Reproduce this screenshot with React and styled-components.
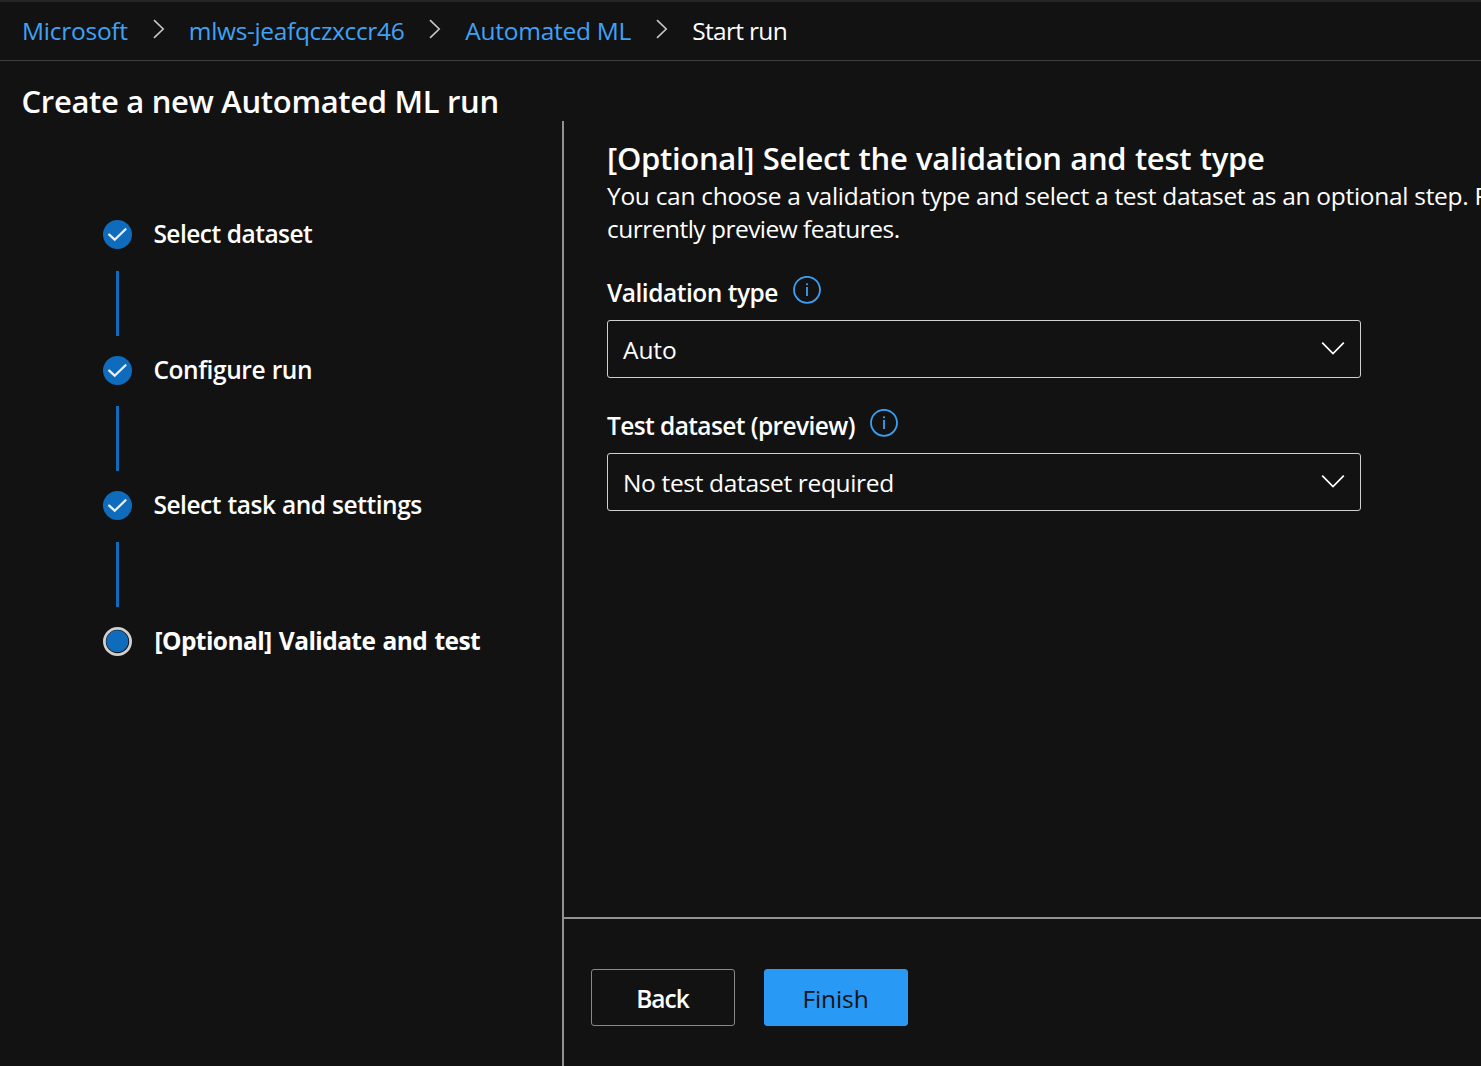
import React from "react";
import styled, { createGlobalStyle } from "styled-components";

const GlobalStyle = createGlobalStyle`
  *, *::before, *::after { box-sizing: border-box; }
  body {
    margin: 0;
    background: #121212;
    color: #fff;
    font-family: "Open Sans", "Noto Sans", sans-serif;
    font-size: 24.5px;
    overflow: hidden;
  }
`;

const Page = styled.div`
  display: flex;
  flex-direction: column;
  width: 100vw;
  height: 100vh;
  overflow: hidden;
`;

const TopBar = styled.nav`
  display: flex;
  align-items: center;
  flex: none;
  height: 61px;
  padding: 0 0 1px 22px;
  border-top: 2px solid #252525;
  border-bottom: 1px solid #3e3e3e;
`;

const Crumb = styled.span`
  line-height: 34px;
  white-space: nowrap;
  color: ${(p) => (p.$current ? "#fff" : "#3fa2f7")};
  letter-spacing: ${(p) => p.$tracking}px;
`;

const CrumbArrow = styled.svg`
  flex: none;
  width: 12px;
  height: 20px;
  margin: 0 24px 3px 25px;
  fill: none;
  stroke: #c8c6c4;
  stroke-width: 1.6;
`;

const Title = styled.h1`
  flex: none;
  height: 60px;
  margin: 0;
  padding: 19px 0 0 21.5px;
  font-size: 31px;
  font-weight: 600;
  line-height: 42px;
  letter-spacing: -0.32px;
`;

const Body = styled.div`
  display: flex;
  flex: 1;
  min-height: 0;
`;

const Steps = styled.ol`
  flex: none;
  width: 562px;
  margin: 0;
  padding: 99px 0 0 103px;
  list-style: none;
`;

const Step = styled.li`
  display: grid;
  grid-template-columns: 29px 1fr;
  column-gap: 20px;
  height: 135.5px;
  align-content: start;
`;

const Marker = styled.svg`
  display: block;
  width: 29px;
  height: 29px;
`;

const StepLabel = styled.span`
  height: 29px;
  line-height: 27px;
  padding-left: ${(p) => (p.$active ? 2.5 : 1.4)}px;
  font-weight: ${(p) => (p.$active ? 700 : 600)};
  letter-spacing: ${(p) => p.$tracking}px;
  word-spacing: ${(p) => (p.$active ? 1.5 : 0.5)}px;
  white-space: nowrap;
`;

const Connector = styled.span`
  width: 3px;
  height: 65px;
  margin: 21.9px 0 0 13px;
  background: #0f6cbd;
`;

const Panel = styled.main`
  display: flex;
  flex-direction: column;
  flex: 1;
  min-width: 0;
  border-left: 2px solid #929292;
`;

const Content = styled.section`
  flex: 1;
  min-height: 0;
  padding: 16px 0 0 43px;
`;

const Heading = styled.h2`
  margin: 0;
  font-size: 31px;
  font-weight: 600;
  line-height: 42px;
  letter-spacing: -0.3px;
  word-spacing: 0.8px;
  white-space: nowrap;
`;

const Description = styled.p`
  margin: 0;
  line-height: 33px;
  white-space: nowrap;
`;

const Line = styled.span`
  display: block;
  letter-spacing: ${(p) => p.$tracking}px;
`;

const Field = styled.div`
  width: 754px;
  padding-top: 29px;
`;

const LabelRow = styled.div`
  display: flex;
  height: 46px;
`;

const Label = styled.label`
  padding-top: 2px;
  font-weight: 600;
  line-height: 34px;
  letter-spacing: ${(p) => p.$tracking}px;
  white-space: nowrap;
`;

const Info = styled.svg`
  width: 28px;
  height: 28px;
  margin: 2px 0 0 15px;
`;

const Dropdown = styled.div`
  display: flex;
  align-items: center;
  justify-content: space-between;
  height: 58px;
  padding: 0 15px;
  border: 1px solid #d2d0ce;
  border-radius: 3px;
`;

const Value = styled.span`
  padding-top: 2px;
  line-height: 34px;
  letter-spacing: ${(p) => p.$tracking}px;
`;

const Caret = styled.svg`
  width: 24px;
  height: 14px;
  margin-bottom: 2px;
  fill: none;
  stroke: #fff;
  stroke-width: 1.7;
`;

const Footer = styled.footer`
  display: flex;
  gap: 29px;
  flex: none;
  height: 149px;
  padding: 50px 0 0 27px;
  border-top: 2px solid #929292;
`;

const Button = styled.button`
  width: 144px;
  height: 57px;
  padding: 1px 1px 0 0;
  border: 1px solid ${(p) => (p.$primary ? "#2899f5" : "#8a8886")};
  border-radius: 3px;
  background: ${(p) => (p.$primary ? "#2899f5" : "transparent")};
  color: ${(p) => (p.$primary ? "#121212" : "#fff")};
  font: inherit;
  font-weight: ${(p) => (p.$primary ? 400 : 600)};
  letter-spacing: ${(p) => p.$tracking}px;
`;

const crumbs = [
  { text: "Microsoft", tracking: -0.25 },
  { text: "mlws-jeafqczxccr46", tracking: -0.35 },
  { text: "Automated ML", tracking: -0.26 },
  { text: "Start run", tracking: -0.67 },
];

const steps = [
  { text: "Select dataset", tracking: -0.54 },
  { text: "Configure run", tracking: -0.42 },
  { text: "Select task and settings", tracking: -0.45 },
  { text: "[Optional] Validate and test", tracking: -0.58 },
];

function StepMarker({ active }) {
  return active ? (
    <Marker viewBox="0 0 29 29">
      <circle cx="14.5" cy="14.5" r="13.1" fill="none" stroke="#d2d0ce" strokeWidth="2.8" />
      <circle cx="14.3" cy="14.3" r="11" fill="#0f6cbd" />
    </Marker>
  ) : (
    <Marker viewBox="0 0 29 29">
      <circle cx="14.5" cy="14.5" r="14.5" fill="#0f6cbd" />
      <path
        d="M6.2 14.6 11.7 19.7 22.5 9.2"
        fill="none"
        stroke="#e8f1fa"
        strokeWidth="2.3"
        strokeLinecap="round"
        strokeLinejoin="miter"
      />
    </Marker>
  );
}

function InfoIcon() {
  return (
    <Info viewBox="0 0 28 28">
      <circle cx="14" cy="13.8" r="13" fill="none" stroke="#3aa0f3" strokeWidth="1.8" />
      <rect x="13.1" y="7.3" width="1.8" height="1.9" fill="#3aa0f3" />
      <rect x="13.1" y="11" width="1.8" height="9" fill="#3aa0f3" />
    </Info>
  );
}

function SelectField({ label, labelTracking, value, valueTracking }) {
  return (
    <Field>
      <LabelRow>
        <Label $tracking={labelTracking}>{label}</Label>
        <InfoIcon />
      </LabelRow>
      <Dropdown>
        <Value $tracking={valueTracking}>{value}</Value>
        <Caret viewBox="0 0 24 14">
          <path d="M1.2 1.7 12 12.5 22.8 1.7" />
        </Caret>
      </Dropdown>
    </Field>
  );
}

export default function App() {
  return (
    <Page>
      <GlobalStyle />
      <TopBar>
        {crumbs.map((c, i) => (
          <React.Fragment key={c.text}>
            {i > 0 && (
              <CrumbArrow viewBox="0 0 12 20">
                <path d="M1 1.2 10.2 10 1 18.8" />
              </CrumbArrow>
            )}
            <Crumb $tracking={c.tracking} $current={i === crumbs.length - 1}>
              {c.text}
            </Crumb>
          </React.Fragment>
        ))}
      </TopBar>
      <Title>Create a new Automated ML run</Title>
      <Body>
        <Steps>
          {steps.map((s, i) => {
            const active = i === steps.length - 1;
            return (
              <Step key={s.text}>
                <StepMarker active={active} />
                <StepLabel $active={active} $tracking={s.tracking}>
                  {s.text}
                </StepLabel>
                {!active && <Connector />}
              </Step>
            );
          })}
        </Steps>
        <Panel>
          <Content>
            <Heading>[Optional] Select the validation and test type</Heading>
            <Description>
              <Line $tracking={-0.29}>
                You can choose a validation type and select a test dataset as an optional step. P
              </Line>
              <Line $tracking={-0.52}>currently preview features.</Line>
            </Description>
            <SelectField
              label="Validation type"
              labelTracking={-0.48}
              value="Auto"
              valueTracking={-0.1}
            />
            <SelectField
              label="Test dataset (preview)"
              labelTracking={-0.59}
              value="No test dataset required"
              valueTracking={-0.34}
            />
          </Content>
          <Footer>
            <Button $tracking={-1}>Back</Button>
            <Button $primary $tracking={-0.1}>
              Finish
            </Button>
          </Footer>
        </Panel>
      </Body>
    </Page>
  );
}
